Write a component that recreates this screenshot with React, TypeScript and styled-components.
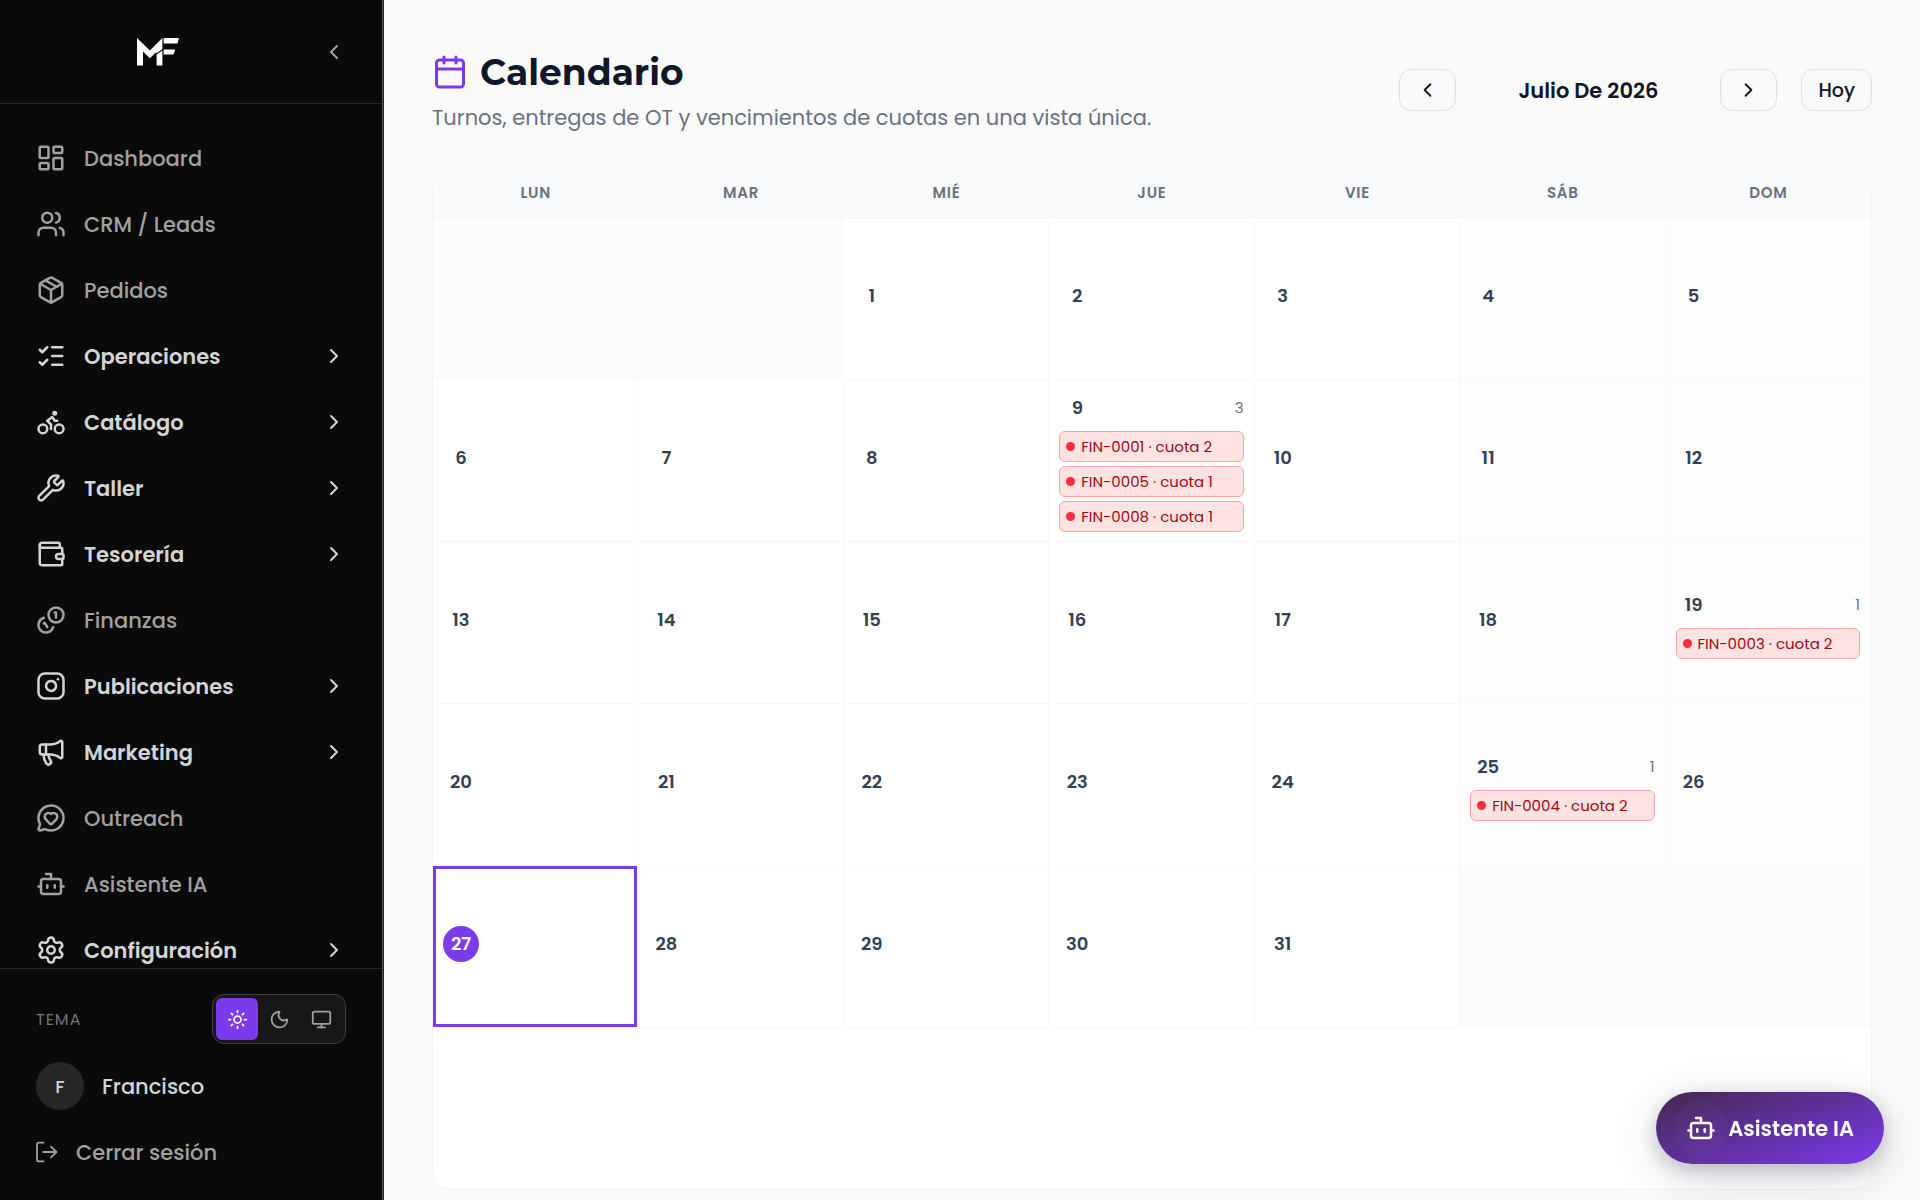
import React from "react";
import styled, { createGlobalStyle, css } from "styled-components";
import {
  Bike,
  Bot,
  Calendar,
  ChevronLeft,
  ChevronRight,
  Instagram,
  LayoutDashboard,
  ListChecks,
  Megaphone,
  MessageCircleHeart,
  Monitor,
  Moon,
  Package,
  Settings,
  Sun,
  Users,
  Wallet,
  Wrench,
} from "lucide-react";

const color = {
  violet: "#7c3aed",
  ink: "#0f172a",
  muted: "#6a7282",
  slate: "#334155",
  line: "#f3f4f6",
  cellLine: "#f8f8fa",
  sidebar: "#0a0a0a",
  sidebarLine: "#262626",
};

const bodyFont = `Poppins, Inter, "Liberation Sans", sans-serif`;
const titleFont = `Montserrat, Inter, "Liberation Sans", sans-serif`;

const GlobalStyle = createGlobalStyle`
  *, *::before, *::after { box-sizing: border-box; }
  body {
    margin: 0;
    background: #fafafa;
    color: ${color.ink};
    font-family: ${bodyFont};
    font-size: 21px;
  }
  button { font: inherit; color: inherit; cursor: pointer; }
  a { color: inherit; text-decoration: none; }
`;

const Shell = styled.div`
  display: flex;
  height: 100vh;
  overflow: hidden;
`;

/* Sidebar */

const Sidebar = styled.aside`
  display: flex;
  flex-direction: column;
  flex: none;
  width: 384px;
  padding-right: 1px;
  background: ${color.sidebar};
  border-right: 1px solid ${color.sidebarLine};
  box-shadow: inset -1px 0 0 #525252;
`;

const Brand = styled.div`
  display: flex;
  align-items: center;
  height: 104px;
  padding-right: 30px;
  border-bottom: 1px solid ${color.sidebarLine};
`;

const LogoLink = styled.a`
  display: flex;
  justify-content: center;
  flex: 1;
`;

const CollapseButton = styled.button`
  display: flex;
  align-items: center;
  justify-content: center;
  width: 36px;
  height: 36px;
  padding: 0;
  border: 0;
  background: none;
  color: #a1a1a1;
`;

const Nav = styled.nav`
  flex: 1;
  min-height: 0;
  overflow: hidden;
  padding: 24px 18px 0;
  display: flex;
  flex-direction: column;
  gap: 6px;
`;

const navItem = css`
  display: flex;
  align-items: center;
  gap: 18px;
  flex: none;
  width: 100%;
  height: 60px;
  padding: 0 18px;
  border: 0;
  background: none;
  text-align: left;
`;

const NavLink = styled.a`
  ${navItem}
  color: #a1a1a1;
  font-weight: 500;
`;

const NavGroup = styled.button`
  ${navItem}
  color: #d4d4d4;
  font-weight: 600;
`;

const NavLabel = styled.span`
  flex: 1;
`;

const SidebarFooter = styled.footer`
  display: flex;
  flex-direction: column;
  gap: 18px;
  padding: 25px 36px 24px;
  border-top: 1px solid ${color.sidebarLine};
`;

const ThemeRow = styled.div`
  display: flex;
  align-items: center;
  justify-content: space-between;
`;

const ThemeLabel = styled.span`
  color: #737373;
  font-size: 16px;
  letter-spacing: 1px;
`;

const ThemeSwitch = styled.div`
  display: flex;
  padding: 3px;
  border: 1px solid #404040;
  border-radius: 12px;
  background: #171717;
`;

const ThemeButton = styled.button<{ $active?: boolean }>`
  display: flex;
  align-items: center;
  justify-content: center;
  width: 42px;
  height: 42px;
  padding: 0;
  border: 0;
  border-radius: 6px;
  background: ${(p) => (p.$active ? color.violet : "transparent")};
  color: ${(p) => (p.$active ? "#fff" : "#a1a1a1")};
`;

const Account = styled.a`
  display: flex;
  align-items: center;
  gap: 18px;
  color: #d4d4d4;
  font-weight: 500;
`;

const Avatar = styled.span`
  display: flex;
  align-items: center;
  justify-content: center;
  width: 48px;
  height: 48px;
  border-radius: 50%;
  background: #262626;
  font-size: 18px;
`;

const SignOut = styled.button`
  display: flex;
  align-items: center;
  gap: 18px;
  height: 48px;
  padding: 0;
  border: 0;
  background: none;
  color: #a1a1a1;
  font-weight: 500;
`;

/* Page */

const Main = styled.main`
  flex: 1;
  min-width: 0;
  padding: 48px 48px 10px;
  display: flex;
  flex-direction: column;
  gap: 36px;
`;

const PageHeader = styled.header`
  display: flex;
  align-items: center;
  justify-content: space-between;
`;

const Heading = styled.div`
  display: flex;
  flex-direction: column;
  gap: 8px;
`;

const Title = styled.h1`
  display: flex;
  align-items: center;
  gap: 12px;
  margin: 0;
  font-family: ${titleFont};
  font-size: 36px;
  line-height: 48px;
  font-weight: 700;

  svg { color: ${color.violet}; }
`;

const Subtitle = styled.p`
  margin: 0;
  color: ${color.muted};
  line-height: 28px;
`;

const MonthNav = styled.div`
  display: flex;
  align-items: center;
  gap: 12px;
`;

const MonthLabel = styled.span`
  min-width: 240px;
  text-align: center;
  font-weight: 600;
`;

const OutlineButton = styled.button`
  display: flex;
  align-items: center;
  justify-content: center;
  height: 42px;
  padding: 0 16px;
  border: 1px solid #e0e0e2;
  border-radius: 12px;
  background: #fafafa;
  font-size: 19px;
  font-weight: 500;
`;

const StepButton = styled(OutlineButton)`
  width: 57px;
`;

const TodayButton = styled(OutlineButton)`
  margin-left: 12px;
`;

const CalendarCard = styled.section`
  border: 1px solid ${color.line};
  border-radius: 21px;
  background: #fff;
  overflow: hidden;
`;

const Weekdays = styled.div`
  display: grid;
  grid-template-columns: repeat(7, minmax(0, 1fr));
  border-bottom: 1px solid ${color.line};
  background: #f8fafc;
`;

const Weekday = styled.span`
  text-align: center;
  color: ${color.muted};
  font-size: 15px;
  line-height: 48px;
  font-weight: 600;
  letter-spacing: 0.05em;
`;

const Days = styled.div`
  display: grid;
  grid-template-columns: repeat(7, minmax(0, 1fr));
  grid-template-rows: repeat(6, 162px);
`;

const cell = css`
  border: 0;
  border-right: 1px solid ${color.cellLine};
  border-bottom: 1px solid ${color.cellLine};
`;

const BlankDay = styled.div`
  ${cell}
  background: #fcfcfc;
`;

const Day = styled.button<{ $weekend?: boolean; $today?: boolean }>`
  ${cell}
  display: flex;
  flex-direction: column;
  justify-content: center;
  gap: 6px;
  padding: 9px 10px;
  background: ${(p) => (p.$weekend ? "#fdfdfd" : "#fff")};
  box-shadow: ${(p) => (p.$today ? `inset 0 0 0 3px ${color.violet}` : "none")};
  text-align: left;
`;

const DayTop = styled.span`
  display: flex;
  align-items: center;
  justify-content: space-between;
  width: 100%;
`;

const DayNumber = styled.span<{ $today?: boolean }>`
  display: flex;
  align-items: center;
  justify-content: center;
  width: 36px;
  height: 36px;
  border-radius: 50%;
  background: ${(p) => (p.$today ? color.violet : "transparent")};
  color: ${(p) => (p.$today ? "#fff" : color.slate)};
  font-size: 18px;
  font-weight: 600;
`;

const DayCount = styled.span`
  color: ${color.muted};
  font-size: 15px;
`;

const Events = styled.span`
  display: flex;
  flex-direction: column;
  gap: 4px;
  width: 100%;
`;

const EventPill = styled.span`
  display: flex;
  align-items: center;
  gap: 6px;
  height: 31px;
  padding: 0 6px;
  border: 1px solid #ffa2a2;
  border-radius: 6px;
  background: #ffe2e2;
  color: #9f0712;
  font-size: 15px;
  white-space: nowrap;

  &::before {
    content: "";
    flex: none;
    width: 9px;
    height: 9px;
    border-radius: 50%;
    background: #fb2c36;
  }
`;

const AssistantButton = styled.button`
  position: fixed;
  right: 36px;
  bottom: 36px;
  display: flex;
  align-items: center;
  gap: 12px;
  height: 72px;
  padding: 0 30px;
  border: 0;
  border-radius: 36px;
  background: linear-gradient(160deg, #43284f 0%, ${color.violet} 100%);
  box-shadow: 0 12px 48px rgba(15, 10, 30, 0.16), 0 6px 18px rgba(67, 40, 79, 0.22);
  color: #fff;
  font-weight: 600;
`;

const AssistantIcon = styled.span`
  position: relative;
  display: flex;

  &::before {
    content: "";
    position: absolute;
    inset: -12px;
    border-radius: 50%;
    background: rgba(255, 255, 255, 0.02);
  }
`;

type IconProps = { size?: number; strokeWidth?: number };
type NavEntry = { label: string; icon: React.ComponentType<IconProps>; group?: boolean };

function CoinsIcon({ size = 24, strokeWidth = 2 }: IconProps) {
  return (
    <svg
      width={size}
      height={size}
      viewBox="0 0 24 24"
      fill="none"
      stroke="currentColor"
      strokeWidth={strokeWidth}
      strokeLinecap="round"
      strokeLinejoin="round"
      aria-hidden="true"
    >
      <path d="M13.744 17.736a6 6 0 1 1-7.48-7.48" />
      <path d="M15 6h1v4" />
      <path d="m6.134 14.768.866-.5 2 3.464" />
      <circle cx="16" cy="8" r="6" />
    </svg>
  );
}

const navEntries: NavEntry[] = [
  { label: "Dashboard", icon: LayoutDashboard },
  { label: "CRM / Leads", icon: Users },
  { label: "Pedidos", icon: Package },
  { label: "Operaciones", icon: ListChecks, group: true },
  { label: "Catálogo", icon: Bike, group: true },
  { label: "Taller", icon: Wrench, group: true },
  { label: "Tesorería", icon: Wallet, group: true },
  { label: "Finanzas", icon: CoinsIcon },
  { label: "Publicaciones", icon: Instagram, group: true },
  { label: "Marketing", icon: Megaphone, group: true },
  { label: "Outreach", icon: MessageCircleHeart },
  { label: "Asistente IA", icon: Bot },
  { label: "Configuración", icon: Settings, group: true },
];

const weekdays = ["LUN", "MAR", "MIÉ", "JUE", "VIE", "SÁB", "DOM"];
const leadingBlanks = 2;
const daysInMonth = 31;
const trailingBlanks = 2;
const today = 27;

const events: Record<number, string[]> = {
  9: ["FIN-0001 · cuota 2", "FIN-0005 · cuota 1", "FIN-0008 · cuota 1"],
  19: ["FIN-0003 · cuota 2"],
  25: ["FIN-0004 · cuota 2"],
};

function Logo() {
  return (
    <svg width="42" height="28" viewBox="0 0 42 28" fill="#fff" role="img" aria-label="MF">
      <path d="M0 0 L12.8 12.4 L25.4 0 V11 L19.6 15.2 L18.8 14.4 L12.8 20.2 L6 13.6 V27.4 H0 Z" />
      <path d="M19.6 16.6 L25.4 12.4 V27.4 H19.6 Z" />
      <path d="M26.6 0 H42 L40.4 5.6 H26.6 Z" />
      <path d="M26.6 11.4 H38.2 L36.6 16.4 H26.6 Z" />
    </svg>
  );
}

function SignOutIcon() {
  return (
    <svg
      width="22"
      height="22"
      viewBox="0 0 22 22"
      fill="none"
      stroke="currentColor"
      strokeWidth="1.8"
      strokeLinecap="round"
      strokeLinejoin="round"
      aria-hidden="true"
    >
      <path d="M7.6 1.6 H3 Q1 1.6 1 3.6 V18.4 Q1 20.4 3 20.4 H7.6" />
      <path d="M7.2 11 H20.4" />
      <path d="M15 5.6 L20.4 11 L15 16.4" />
    </svg>
  );
}

function SidebarEntry({ label, icon: Icon, group }: NavEntry) {
  if (group) {
    return (
      <NavGroup type="button" aria-expanded={false}>
        <Icon size={30} strokeWidth={2} />
        <NavLabel>{label}</NavLabel>
        <ChevronRight size={24} strokeWidth={2} />
      </NavGroup>
    );
  }
  return (
    <NavLink href="#">
      <Icon size={30} strokeWidth={2} />
      <NavLabel>{label}</NavLabel>
    </NavLink>
  );
}

function CalendarDay({ day }: { day: number }) {
  const column = (day - 1 + leadingBlanks) % 7;
  const items = events[day] ?? [];
  const isToday = day === today;
  return (
    <Day type="button" $weekend={column > 4} $today={isToday}>
      <DayTop>
        <DayNumber $today={isToday}>{day}</DayNumber>
        {items.length > 0 && <DayCount>{items.length}</DayCount>}
      </DayTop>
      <Events>
        {items.map((item) => (
          <EventPill key={item}>{item}</EventPill>
        ))}
      </Events>
    </Day>
  );
}

export default function App() {
  return (
    <>
      <GlobalStyle />
      <Shell>
        <Sidebar>
          <Brand>
            <LogoLink href="#">
              <Logo />
            </LogoLink>
            <CollapseButton type="button" aria-label="Contraer menú">
              <ChevronLeft size={24} strokeWidth={2} />
            </CollapseButton>
          </Brand>
          <Nav>
            {navEntries.map((entry) => (
              <SidebarEntry key={entry.label} {...entry} />
            ))}
          </Nav>
          <SidebarFooter>
            <ThemeRow>
              <ThemeLabel>TEMA</ThemeLabel>
              <ThemeSwitch role="group" aria-label="Tema">
                <ThemeButton type="button" aria-label="Claro" aria-pressed $active>
                  <Sun size={21} />
                </ThemeButton>
                <ThemeButton type="button" aria-label="Oscuro" aria-pressed={false}>
                  <Moon size={21} />
                </ThemeButton>
                <ThemeButton type="button" aria-label="Sistema" aria-pressed={false}>
                  <Monitor size={21} />
                </ThemeButton>
              </ThemeSwitch>
            </ThemeRow>
            <Account href="#">
              <Avatar>F</Avatar>
              Francisco
            </Account>
            <SignOut type="button">
              <SignOutIcon />
              Cerrar sesión
            </SignOut>
          </SidebarFooter>
        </Sidebar>

        <Main>
          <PageHeader>
            <Heading>
              <Title>
                <Calendar size={36} strokeWidth={2} />
                Calendario
              </Title>
              <Subtitle>Turnos, entregas de OT y vencimientos de cuotas en una vista única.</Subtitle>
            </Heading>
            <MonthNav>
              <StepButton type="button" aria-label="Mes anterior">
                <ChevronLeft size={24} strokeWidth={2} />
              </StepButton>
              <MonthLabel>Julio De 2026</MonthLabel>
              <StepButton type="button" aria-label="Mes siguiente">
                <ChevronRight size={24} strokeWidth={2} />
              </StepButton>
              <TodayButton type="button">Hoy</TodayButton>
            </MonthNav>
          </PageHeader>

          <CalendarCard>
            <Weekdays>
              {weekdays.map((name) => (
                <Weekday key={name}>{name}</Weekday>
              ))}
            </Weekdays>
            <Days>
              {Array.from({ length: leadingBlanks }, (_, i) => (
                <BlankDay key={`before-${i}`} />
              ))}
              {Array.from({ length: daysInMonth }, (_, i) => (
                <CalendarDay key={i + 1} day={i + 1} />
              ))}
              {Array.from({ length: trailingBlanks }, (_, i) => (
                <BlankDay key={`after-${i}`} />
              ))}
            </Days>
          </CalendarCard>
        </Main>
      </Shell>

      <AssistantButton type="button">
        <AssistantIcon>
          <Bot size={30} strokeWidth={2} />
        </AssistantIcon>
        Asistente IA
      </AssistantButton>
    </>
  );
}
